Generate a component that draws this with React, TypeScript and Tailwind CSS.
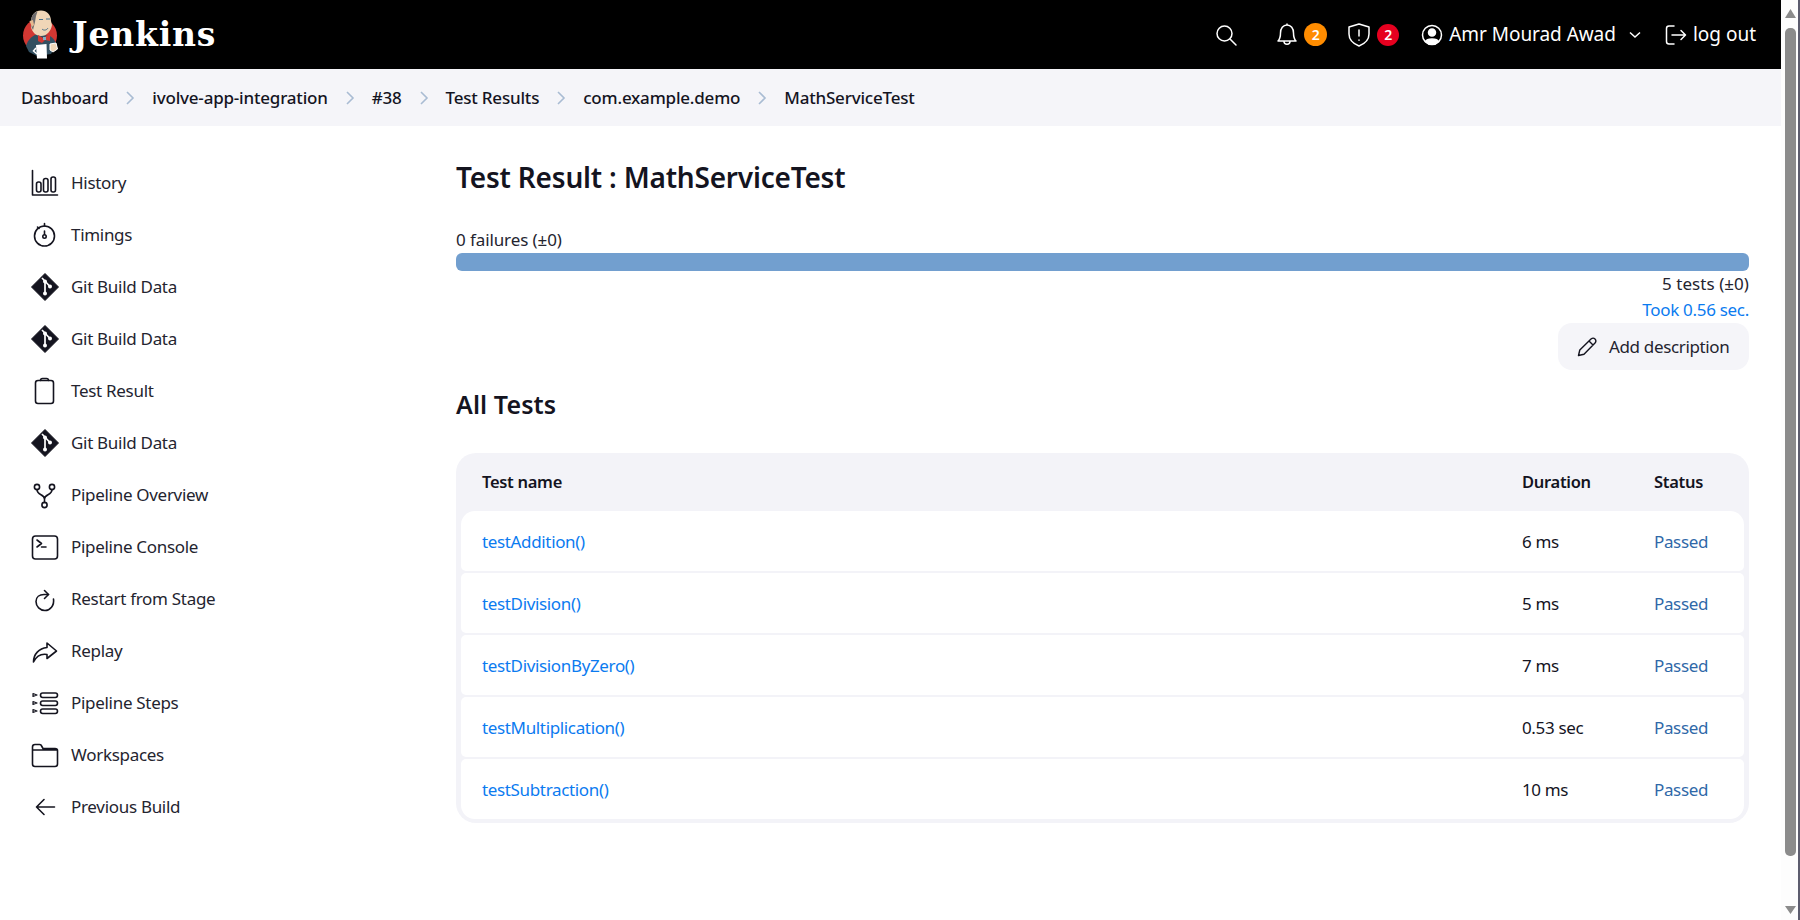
import React from "react";

const F = '"Noto Sans","Open Sans",sans-serif';

function Jenkins() {
  return (
    <svg width="40" height="50" viewBox="0 0 40 50" className="shrink-0">
      <circle cx="19" cy="25.5" r="17" fill="#d33833" />
      <path d="M5 36 C7 29 12 25 17 24 L29 26 C34 29 35 33 35 36 L30 44 L16 46 L8 42Z" fill="#335061" />
      <path d="M10 12 C10 5 14 0.5 20 0.5 C26 0.5 30 5 30 11 L31 15 C30 21 26 26 20 26 C15 26 11 22 10 17Z" fill="#f0d6b7" />
      <path d="M10.5 8 C11.5 4 14 2 16.5 1.5 L15 6 L14 12 L12 20 C9.5 16 9.5 12 10.5 8Z" fill="#6d6b6d" />
      <path d="M8.5 11 L11 17 L13 15 L12 10Z" fill="#e7b98f" />
      <path d="M18 9.5h4M25 9h4M21 19 c2 2 5 1 6-1" stroke="#49728b" strokeWidth="1" fill="none" />
      <path d="M17 25 L22 28 L29 24 L29 31 L24 30 L21 33 L17 31Z" fill="#d33833" />
      <rect x="22" y="27" width="3" height="3" fill="#81b0c4" />
      <path d="M29 34 L35 33 L36.5 39 L32 42 L29 40Z" fill="#f0d6b7" stroke="#fff" strokeWidth="1" />
      <path d="M15 35 L25.5 34 L26 48.5 L16 48.5Z" fill="#fff" />
      <path d="M15 38 L12.5 41 L16 44" stroke="#fff" strokeWidth="1.5" fill="none" />
    </svg>
  );
}

const s = { fill: "none", stroke: "currentColor", strokeWidth: 1.6, strokeLinecap: "round" as const, strokeLinejoin: "round" as const };

function Ico({ children }: { children: React.ReactNode }) {
  return <svg width="28" height="28" viewBox="0 0 28 28" className="shrink-0 text-[#14141f]" {...s}>{children}</svg>;
}

const GitIcon = () => (
  <svg width="28" height="28" viewBox="0 0 28 28" className="shrink-0">
    <path d="M14 0.5 L27.5 14 L14 27.5 L0.5 14Z" fill="#14141f" stroke="#14141f" strokeLinejoin="round" strokeWidth="1" />
    <path d="M11 5 L19 13.5 M14 8.5 V20.5" stroke="#fff" strokeWidth="1.7" />
    <circle cx="14" cy="8.5" r="2" fill="#fff" />
    <circle cx="19" cy="13.5" r="2" fill="#fff" />
    <circle cx="14" cy="20.5" r="2" fill="#fff" />
  </svg>
);

const items: [string, React.ReactNode][] = [
  ["History", <Ico><path d="M1.5 1.5V26H26.5" /><rect x="5.5" y="13" width="4.5" height="10" rx="2" /><rect x="12.5" y="9.5" width="4.5" height="13.5" rx="2" /><rect x="20" y="8" width="4.5" height="15" rx="2" /></Ico>],
  ["Timings", <Ico><circle cx="13.5" cy="15" r="10" /><path d="M13.5 2.5 V5 M6.5 6 L8 7.5 M13.5 10 V13.5" /><circle cx="13.5" cy="15.5" r="1.7" /></Ico>],
  ["Git Build Data", <GitIcon />],
  ["Git Build Data", <GitIcon />],
  ["Test Result", <Ico><rect x="4.5" y="3.5" width="18" height="23" rx="2.5" /><path d="M9.5 3.5 C9.5 2 10.5 1.5 11.5 1.5 H15.5 C16.5 1.5 17.5 2 17.5 3.5" /></Ico>],
  ["Git Build Data", <GitIcon />],
  ["Pipeline Overview", <Ico><circle cx="6" cy="6" r="2.6" /><circle cx="21" cy="6" r="2.6" /><circle cx="13.5" cy="24" r="2.6" /><path d="M6 8.6 C6 14.5 13.5 13 13.5 18 V21.4 M21 8.6 C21 14.5 13.5 13 13.5 18" /></Ico>],
  ["Pipeline Console", <Ico><rect x="1.5" y="3" width="25" height="23" rx="3" /><path d="M6 7 L10.5 10.5 L6 14 M10.5 14 H15" /></Ico>],
  ["Restart from Stage", <Ico><path d="M22.5 14 C23.5 20.5 19 25.5 14 25.5 C9 25.5 5 21.5 5 16.5 C5 12 8.5 9.5 13 9.5 H17.5" /><path d="M13.5 5.5 L17.5 9.5 L13.5 13.5" /></Ico>],
  ["Replay", <Ico><path d="M16 6 L25.5 14 L16 21.5 V17.5 C10 16.5 5.5 19 2.5 25 C2.5 17 8 11.5 16 10.5Z" /></Ico>],
  ["Pipeline Steps", <Ico><rect x="9.5" y="4" width="17" height="4.5" rx="2.2" /><rect x="9.5" y="12" width="17" height="4.5" rx="2.2" /><rect x="9.5" y="20" width="17" height="4.5" rx="2.2" /><path d="M2 4.5 L6 6 L2 7.5Z M2 12.5 L6 14 L2 15.5Z M2 20.5 L6 22 L2 23.5Z" strokeWidth="1.2" /></Ico>],
  ["Workspaces", <Ico><path d="M1.5 7 V23 C1.5 24.5 2.5 25.5 4 25.5 H24 C25.5 25.5 26.5 24.5 26.5 23 V9.5 C26.5 8.5 25.5 7.5 24 7.5 H12 L10 4 C9.5 3.5 9 3.5 8.5 3.5 H4 C2.5 3.5 1.5 4.5 1.5 6 Z M1.5 9 H26.5" /></Ico>],
  ["Previous Build", <Ico><path d="M23.5 14 H5.5 M13 6.5 L5.5 14 L13 21.5" /></Ico>],
];

const crumbs = ["Dashboard", "ivolve-app-integration", "#38", "Test Results", "com.example.demo", "MathServiceTest"];

const rows = [
  ["testAddition()", "6 ms"],
  ["testDivision()", "5 ms"],
  ["testDivisionByZero()", "7 ms"],
  ["testMultiplication()", "0.53 sec"],
  ["testSubtraction()", "10 ms"],
];

export default function App() {
  return (
    <div className="flex h-[920px] w-[1800px] overflow-hidden bg-white text-[#14141f]" style={{ fontFamily: F }}>
      <div className="flex w-[1781px] flex-col">
        <header className="flex h-[69px] items-center bg-black pl-[21px] pr-[25px] text-white">
          <Jenkins />
          <span className="ml-[11px] text-[33px] font-bold leading-none tracking-[0.8px]" style={{ fontFamily: '"DejaVu Serif",serif' }}>Jenkins</span>
          <div className="ml-auto flex items-center">
            <svg width="24" height="24" viewBox="0 0 24 24" fill="none" stroke="#fff" strokeWidth="1.5" strokeLinecap="round"><circle cx="10.5" cy="10.5" r="7.5" /><path d="M16 16 L22 22" /></svg>
            <svg className="ml-[37px]" width="24" height="26" viewBox="0 0 24 26" fill="none" stroke="#fff" strokeWidth="1.5" strokeLinejoin="round"><path d="M3 19 C5 17 5.5 15 5.5 11 C5.5 6.5 8 3 12 3 C16 3 18.5 6.5 18.5 11 C18.5 15 19 17 21 19 Z M12 1.5 V3 M9 19.5 C9 23 15 23 15 19.5" /></svg>
            <span className="ml-[5px] flex h-[23px] w-[23px] items-center justify-center rounded-full bg-[#ff8c00] text-[14px] font-semibold">2</span>
            <svg className="ml-[20px]" width="24" height="26" viewBox="0 0 24 26" fill="none" stroke="#fff" strokeWidth="1.5" strokeLinejoin="round" strokeLinecap="round"><path d="M12 2 L22 5 V12 C22 18 17 22 12 24 C7 22 2 18 2 12 V5Z M12 8 V14 M12 18 V18.2" /></svg>
            <span className="ml-[6px] flex h-[22px] w-[22px] items-center justify-center rounded-full bg-[#e6001f] text-[14px] font-semibold">2</span>
            <svg className="ml-[22px]" width="22" height="22" viewBox="0 0 22 22" fill="none" stroke="#fff" strokeWidth="1.5"><circle cx="11" cy="11" r="9.5" /><circle cx="11" cy="8.5" r="3.5" fill="#fff" /><path d="M4.5 17.5 C6 14 16 14 17.5 17.5 L14 20 H8Z" fill="#fff" /></svg>
            <span className="ml-[6px] text-[19px] tracking-[-0.05px]">Amr Mourad Awad</span>
            <svg className="ml-[13px]" width="12" height="8" viewBox="0 0 12 8" fill="none" stroke="#fff" strokeWidth="1.5"><path d="M1 1.5 L6 6 L11 1.5" /></svg>
            <svg className="ml-[24px]" width="22" height="22" viewBox="0 0 22 22" fill="none" stroke="#fff" strokeWidth="1.5" strokeLinecap="round" strokeLinejoin="round"><path d="M9 2 H4 C2.5 2 1.5 3 1.5 4.5 V17.5 C1.5 19 2.5 20 4 20 H9 M7 11 H20.5 M16 6.5 L20.5 11 L16 15.5" /></svg>
            <span className="ml-[6px] text-[19px]">log out</span>
          </div>
        </header>

        <nav className="flex h-[57px] items-center bg-[#f5f5f9] pl-[21px] text-[17px] font-medium tracking-[-0.2px]">
          {crumbs.map((c, i) => (
            <React.Fragment key={c}>
              {i > 0 && (
                <svg className="mx-[16px]" width="12" height="14" viewBox="0 0 12 14" fill="none" stroke="#a9bcd3" strokeWidth="1.6"><path d="M3 1 L9 7 L3 13" /></svg>
              )}
              <span>{c}</span>
            </React.Fragment>
          ))}
        </nav>

        <div className="flex flex-1">
          <aside className="w-[456px] shrink-0 pl-[31px] pt-[31px]">
            {items.map(([label, icon], i) => (
              <div key={i} className="flex h-[52px] items-center gap-[12px] text-[17px] tracking-[-0.3px] text-[#24242f]">
                {icon}
                <span>{label}</span>
              </div>
            ))}
          </aside>

          <main className="w-[1293px] pt-[31px]">
            <h1 className="text-[28px] font-semibold leading-[40px] tracking-[-0.2px]">Test Result : MathServiceTest</h1>
            <div className="mt-[30px] text-[17px] leading-[26px] tracking-[-0.1px] text-[#24242f]">0 failures (±0)</div>
            <div className="h-[18px] rounded-[6px] bg-[#729fcf]" />
            <div className="text-right text-[17px] leading-[26px] tracking-[0.05px] text-[#24242f]">5 tests (±0)</div>
            <div className="text-right text-[17px] leading-[26px] tracking-[-0.3px] text-[#0b7bf0]">Took 0.56 sec.</div>
            <div className="flex justify-end">
              <div className="flex h-[47px] w-[191px] items-center gap-[12px] rounded-[14px] bg-[#f5f5f9] pl-[19px] text-[17px] tracking-[-0.35px] text-[#24242f]">
                <svg width="20" height="20" viewBox="0 0 20 20" fill="none" stroke="#14141f" strokeWidth="1.4" strokeLinejoin="round"><path d="M1.5 18.5 L2.8 13 L14 2 C15.5 0.8 17 1 18 2 C19 3 19.2 4.5 18 6 L7 17.2 Z M12 4 L16 8" /></svg>
                <span>Add description</span>
              </div>
            </div>
            <h2 className="mt-[16px] text-[25px] font-semibold leading-[36px] tracking-[0.1px]">All Tests</h2>
            <div className="mt-[31px] rounded-[20px] bg-[#f3f3f8] px-[5px] pb-[4px]">
              <div className="flex h-[58px] items-center pl-[21px] text-[16.5px] font-semibold tracking-[-0.3px]">
                <div className="flex-1">Test name</div>
                <div className="w-[132px]">Duration</div>
                <div className="w-[90px]">Status</div>
              </div>
              <div className="flex flex-col gap-[2px]">
                {rows.map(([n, d], i) => (
                  <div key={n} className={`flex h-[60px] items-center bg-white pl-[21px] pt-[1px] text-[17px] tracking-[-0.35px] ${i === 0 ? "rounded-t-[14px] rounded-b-[5px]" : i === 4 ? "rounded-b-[14px] rounded-t-[5px]" : "rounded-[5px]"}`}>
                    <div className="flex-1 text-[#0b7bf0]">{n}</div>
                    <div className="w-[132px] text-[#14141f]">{d}</div>
                    <div className="w-[90px] text-[#2f68a8]">Passed</div>
                  </div>
                ))}
              </div>
            </div>
          </main>
        </div>
      </div>

      <div className="flex w-[19px] shrink-0">
        <div className="flex w-[17px] flex-col bg-[#fdfdfd] pl-[4px]">
          <svg className="mt-[9px]" width="11" height="9" viewBox="0 0 11 9"><path d="M0 9 L5.5 0 L11 9Z" fill="#8b8b8b" /></svg>
          <div className="mt-[10px] h-[828px] w-[11px] rounded-t-[5px] rounded-b-[5px] bg-[#8b8b8b]" />
          <svg className="mt-[50px]" width="11" height="8" viewBox="0 0 11 8"><path d="M0 0 L5.5 8 L11 0Z" fill="#8b8b8b" /></svg>
        </div>
        <div className="w-[2px] bg-[#5c5c6e]" />
      </div>
    </div>
  );
}
